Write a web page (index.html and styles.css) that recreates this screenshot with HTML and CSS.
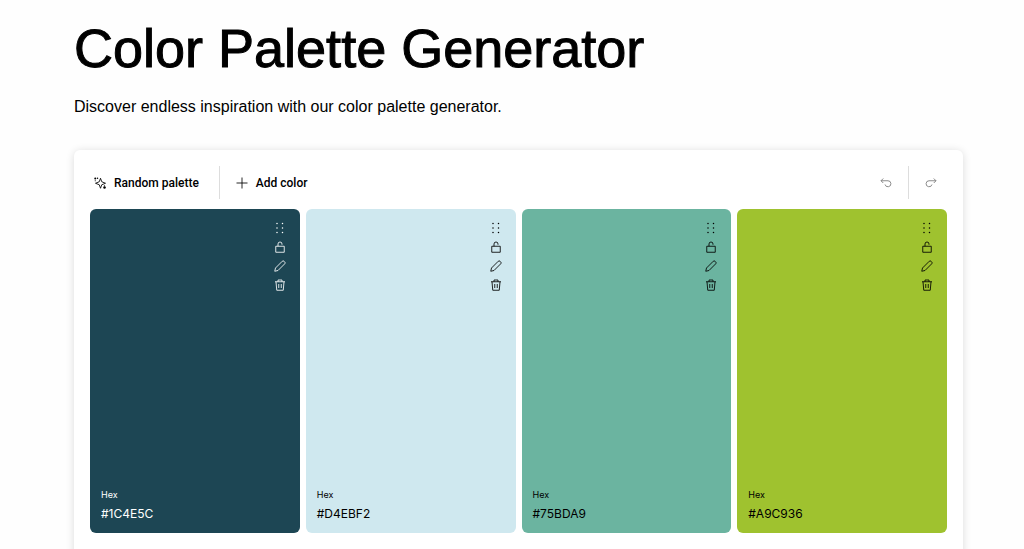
FILE: index.html
```
<!DOCTYPE html>
<html lang="en">
<head>
  <meta charset="UTF-8">
  <meta name="viewport" content="width=device-width, initial-scale=1">
  <title>Color Palette Generator</title>
  <link rel="stylesheet" href="styles.css">
</head>
<body>
  <!-- Icon set -->
  <svg class="sprite" aria-hidden="true">
    <symbol id="i-sparkle" viewBox="0 0 24 24">
      <path d="M13 2.500L15.500 9.500L23 12.500L15.500 15.500L13 22.500L10.500 15.500L3 12.500L10.500 9.500Z"/>
      <g fill="currentColor" stroke="none">
        <circle cx="2.500" cy="3" r="2"/><circle cx="7" cy="2.500" r="1.500"/><circle cx="2.500" cy="7.500" r="1.200"/>
        <circle cx="21" cy="21" r="2.500"/><circle cx="21" cy="17.500" r="1.200"/>
      </g>
    </symbol>
    <symbol id="i-plus" viewBox="0 0 24 24"><path d="M12 1v22M1 12h22"/></symbol>
    <symbol id="i-undo" viewBox="0 0 24 24"><path d="M6.500 3L2 7.500L6.500 12M2 7.500H16A6 6 0 1 1 10 15"/></symbol>
    <symbol id="i-redo" viewBox="0 0 24 24"><path d="M17.500 3L22 7.500L17.500 12M22 7.500H8A6 6 0 1 0 14 15"/></symbol>
    <symbol id="i-drag" viewBox="0 0 24 24">
      <g fill="currentColor" stroke="none">
        <circle cx="6" cy="3" r="1.500"/><circle cx="17" cy="3" r="1.500"/>
        <circle cx="6" cy="12" r="1.500"/><circle cx="17" cy="12" r="1.500"/>
        <circle cx="6" cy="21" r="1.500"/><circle cx="17" cy="21" r="1.500"/>
      </g>
    </symbol>
    <symbol id="i-lock" viewBox="0 0 24 24"><path d="M3.500 10.500h17v12h-17zM8 10.500V6a4 4 0 0 1 8 0v1.500"/></symbol>
    <symbol id="i-edit" viewBox="0 0 24 24"><path d="M1.500 22.500l1.500-6.500L16.500 2.500a2.500 2.500 0 0 1 3.500 0l1.500 1.500a2.500 2.500 0 0 1 0 3.500L8 21z"/></symbol>
    <symbol id="i-trash" viewBox="0 0 24 24"><path d="M2 5.500h20M8 5.500V2h8v3.500M4 5.500l1.500 17h13l1.500-17M9.500 10v8M14.500 10v8"/></symbol>
  </svg>

  <main class="page">
    <h1>Color Palette Generator</h1>
    <p class="intro">Discover endless inspiration with our color palette generator.</p>

    <section class="card">
      <div class="toolbar">
        <button class="btn"><svg><use href="#i-sparkle"/></svg>Random palette</button>
        <span class="divider"></span>
        <button class="btn"><svg><use href="#i-plus"/></svg>Add color</button>
        <div class="history">
          <button class="btn" aria-label="Undo" disabled><svg><use href="#i-undo"/></svg></button>
          <span class="divider"></span>
          <button class="btn" aria-label="Redo" disabled><svg><use href="#i-redo"/></svg></button>
        </div>
      </div>

      <div class="palette">
        <div class="swatch teal-dark">
          <div class="tools">
            <button aria-label="Move color"><svg><use href="#i-drag"/></svg></button>
            <button aria-label="Lock color"><svg><use href="#i-lock"/></svg></button>
            <button aria-label="Edit color"><svg><use href="#i-edit"/></svg></button>
            <button aria-label="Delete color"><svg><use href="#i-trash"/></svg></button>
          </div>
          <div class="code"><span>Hex</span><strong>#1C4E5C</strong></div>
        </div>
        <div class="swatch ice">
          <div class="tools">
            <button aria-label="Move color"><svg><use href="#i-drag"/></svg></button>
            <button aria-label="Lock color"><svg><use href="#i-lock"/></svg></button>
            <button aria-label="Edit color"><svg><use href="#i-edit"/></svg></button>
            <button aria-label="Delete color"><svg><use href="#i-trash"/></svg></button>
          </div>
          <div class="code"><span>Hex</span><strong>#D4EBF2</strong></div>
        </div>
        <div class="swatch mint">
          <div class="tools">
            <button aria-label="Move color"><svg><use href="#i-drag"/></svg></button>
            <button aria-label="Lock color"><svg><use href="#i-lock"/></svg></button>
            <button aria-label="Edit color"><svg><use href="#i-edit"/></svg></button>
            <button aria-label="Delete color"><svg><use href="#i-trash"/></svg></button>
          </div>
          <div class="code"><span>Hex</span><strong>#75BDA9</strong></div>
        </div>
        <div class="swatch lime">
          <div class="tools">
            <button aria-label="Move color"><svg><use href="#i-drag"/></svg></button>
            <button aria-label="Lock color"><svg><use href="#i-lock"/></svg></button>
            <button aria-label="Edit color"><svg><use href="#i-edit"/></svg></button>
            <button aria-label="Delete color"><svg><use href="#i-trash"/></svg></button>
          </div>
          <div class="code"><span>Hex</span><strong>#A9C936</strong></div>
        </div>
      </div>
    </section>
  </main>
</body>
</html>
```
FILE: styles.css
```
* {
  box-sizing: border-box;
}

body {
  margin: 0;
  background: #fefefe;
  color: #000;
  font-family: "Liberation Sans", Arial, sans-serif;
}

.sprite {
  display: none;
}

svg {
  width: 12px;
  height: 12px;
  fill: none;
  stroke: currentColor;
  stroke-width: 1.7;
  stroke-linejoin: round;
}

button {
  display: flex;
  align-items: center;
  padding: 0;
  border: none;
  background: none;
  color: inherit;
  cursor: pointer;
}

.page {
  padding: 16px 61px 32px 74px;
}

h1 {
  margin: 0;
  font-size: 54px;
  font-weight: 400;
  line-height: 64px;
  -webkit-text-stroke: 1px #000;
}

.intro {
  margin: 16px 0 32px;
  font-size: 16px;
  line-height: 22px;
}

.card {
  padding: 16px 16px 48px;
  border-radius: 6px;
  background: #fff;
  box-shadow: 0 1px 8px rgba(0, 0, 0, 0.14);
}

.toolbar {
  display: flex;
  align-items: center;
  height: 33px;
  margin-bottom: 10px;
}

.btn {
  gap: 8px;
  height: 33px;
  padding: 0 10px 0 16px;
  font-family: Roboto, "Liberation Sans", sans-serif;
  font-size: 12px;
  font-weight: 500;
}

.btn:first-child {
  padding-left: 4px;
  padding-right: 20px;
}

.btn:disabled {
  color: #777;
}

.divider {
  width: 1px;
  height: 33px;
  background: #ddd;
}

.history {
  display: flex;
  margin-left: auto;
}

.history .btn:first-child {
  padding: 0 16px;
}

.palette {
  display: grid;
  grid-template-columns: repeat(4, 1fr);
  gap: 6px;
}

.swatch {
  display: flex;
  flex-direction: column;
  justify-content: space-between;
  min-height: 324px;
  padding: 12px 14px 10px 11px;
  border-radius: 6px;
}

.tools {
  display: flex;
  flex-direction: column;
  align-items: flex-end;
  gap: 5px;
}

.tools button {
  height: 14px;
}

.code {
  font-family: Inter, "Liberation Sans", sans-serif;
}

.code span,
.code strong {
  display: block;
  font-weight: 400;
}

.code span {
  font-size: 9px;
  line-height: 19px;
}

.code strong {
  font-size: 12px;
  line-height: 19px;
}

.teal-dark {
  background: #1d4654;
  color: #fff;
}

.ice {
  background: #cfe8ef;
}

.mint {
  background: #6bb4a0;
}

.lime {
  background: #9fc22f;
}
```
